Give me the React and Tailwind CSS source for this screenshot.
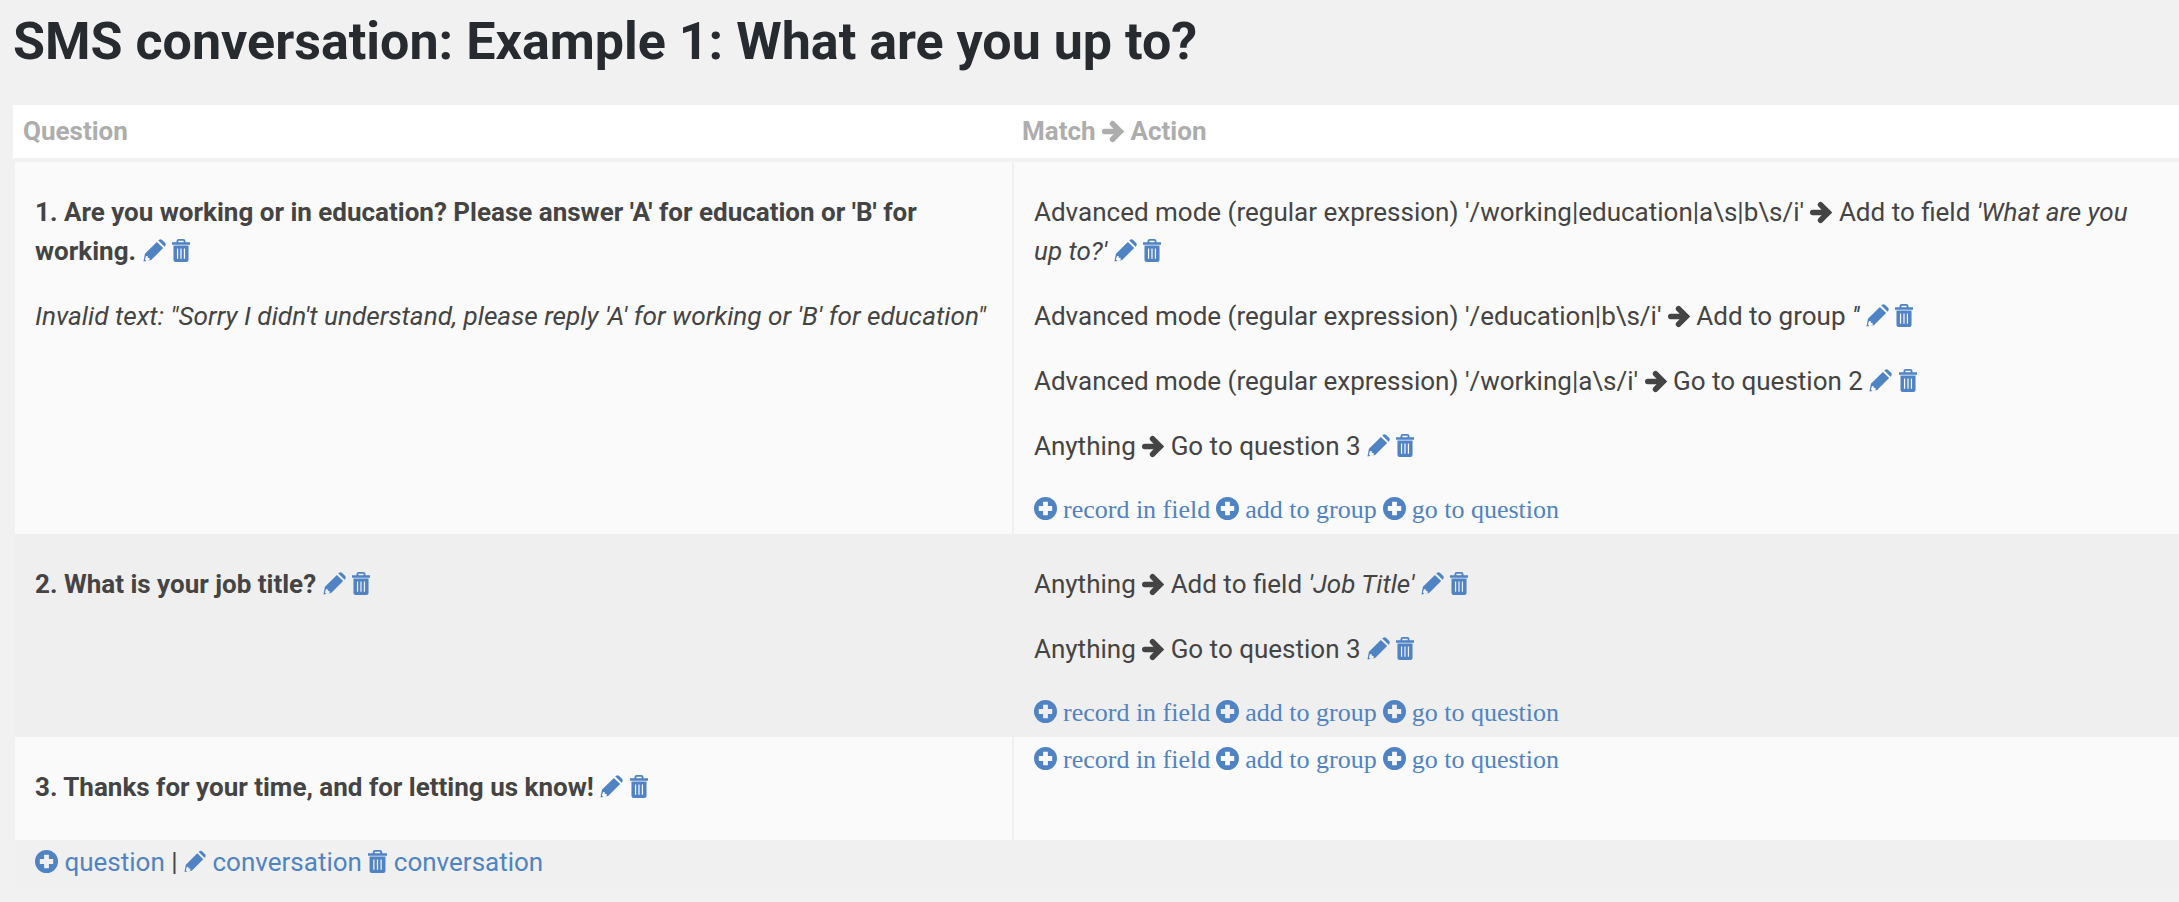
import React from 'react';

function Pencil({ className }) {
  return (
    <svg viewBox="0 0 24 24" fill="currentColor" fillRule="evenodd" className={className}>
      <path d="M2 15.5 14.5 3 21 9.500 8.500 22 .5 23.500ZM3 18l-1 3.500 1.500 1.500 3.500-1-.2-2.300-1.800-.2-.2-1.800Z" />
      <path d="M16 1.500 16.500 1a2.800 2.800 0 0 1 3.500 0l3 3a2.800 2.800 0 0 1 0 3.500L22.500 8Z" />
    </svg>
  );
}

function Trash({ className }) {
  return (
    <svg viewBox="0 0 16 22" fill="currentColor" fillRule="evenodd" preserveAspectRatio="none" className={className}>
      <path d="M4 3V2a2 2 0 0 1 2-2h4a2 2 0 0 1 2 2v1h4v2.500H0V3ZM5.700 3h4.600V1.700H5.700Z" />
      <path d="M1.300 6.300h13.400V20a2 2 0 0 1-2 2H3.300a2 2 0 0 1-2-2ZM4.400 9v10h1.100V9Zm3.050 0v10h1.100V9Zm3.050 0v10h1.100V9Z" />
    </svg>
  );
}

function Plus({ className }) {
  return (
    <svg viewBox="0 0 24 24" fill="currentColor" fillRule="evenodd" className={className}>
      <path d="M12 0a12 12 0 1 1 0 24 12 12 0 0 1 0-24Zm-2.500 5v4.500H5v5h4.500V19h5v-4.500H19v-5h-4.500V5Z" />
    </svg>
  );
}

function Arrow() {
  return (
    <svg viewBox="0 0 24 24" fill="none" stroke="currentColor" strokeWidth="6" strokeLinecap="round" strokeLinejoin="miter" className="inline-block w-[22px] h-[23px] align-[-3px]">
      <path d="M3 12h16M11.500 3.500 20 12l-8.500 8.500" />
    </svg>
  );
}

function Tools() {
  return (
    <span className="text-[#4f83c3]">
      {' '}
      <Pencil className="inline-block w-[23px] h-[23px] align-[-2px]" />{' '}
      <Trash className="inline-block w-[18px] h-[23px] align-[-2px]" />
    </span>
  );
}

function AddLinks() {
  return (
    <div className="font-['Liberation_Serif',serif] text-[#4f83c3] text-[26px] leading-[35px] flex items-center gap-[6px]">
      <span><Plus className="inline-block w-[23px] h-[23px] align-[-2px] mr-[6px]" />record in field</span>
      <span><Plus className="inline-block w-[23px] h-[23px] align-[-2px] mr-[6px]" />add to group</span>
      <span><Plus className="inline-block w-[23px] h-[23px] align-[-2px] mr-[6px]" />go to question</span>
    </div>
  );
}

function Rule({ children }) {
  return <p className="mb-[26px]">{children}<Tools /></p>;
}

export default function App() {
  return (
    <div className="min-h-[902px] bg-[#f1f1f1] pl-[13px] overflow-hidden font-['Roboto',sans-serif] text-[26px] leading-[39px] text-[#444444]">
      <h1 className="text-[52px] leading-[60px] font-bold text-[#272b30] pt-[12px] mb-[33px]">SMS conversation: Example 1: What are you up to?</h1>

      <div className="grid grid-cols-[999px_1fr] h-[53px] bg-white items-center font-bold text-[#adadad]">
        <div className="pl-[10px]">Question</div>
        <div className="pl-[10px]">Match <Arrow /> Action</div>
      </div>

      <div className="ml-[2px] mt-[4px]">
        <div className="grid grid-cols-[999px_1fr] bg-[#fafafa]">
          <div className="pl-[20px] pr-[10px] pt-[31px] border-r-2 border-[#f0f0f0]">
            <p className="font-bold mb-[26px]">1. Are you working or in education? Please answer 'A' for education or 'B' for working.<Tools /></p>
            <p className="italic text-[26.2px]">Invalid text: "Sorry I didn't understand, please reply 'A' for working or 'B' for education"</p>
          </div>
          <div className="px-[20px] pt-[31px] pb-[7px]">
            <Rule>Advanced mode (regular expression) '/working|education|a\s|b\s/i' <Arrow /> Add to field <em>'What are you up to?'</em></Rule>
            <Rule>Advanced mode (regular expression) '/education|b\s/i' <Arrow /> Add to group <em>''</em></Rule>
            <Rule>Advanced mode (regular expression) '/working|a\s/i' <Arrow /> Go to question 2</Rule>
            <Rule>Anything <Arrow /> Go to question 3</Rule>
            <AddLinks />
          </div>
        </div>

        <div className="grid grid-cols-[999px_1fr] bg-[#efefef]">
          <div className="pl-[20px] pr-[10px] pt-[31px]">
            <p className="font-bold">2. What is your job title?<Tools /></p>
          </div>
          <div className="px-[20px] pt-[31px] pb-[7px]">
            <Rule>Anything <Arrow /> Add to field <em>'Job Title'</em></Rule>
            <Rule>Anything <Arrow /> Go to question 3</Rule>
            <AddLinks />
          </div>
        </div>

        <div className="grid grid-cols-[999px_1fr] bg-[#fafafa] h-[103px]">
          <div className="pl-[20px] pr-[10px] pb-[2px] flex items-center border-r-2 border-[#f0f0f0]">
            <p className="font-bold">3. Thanks for your time, and for letting us know!<Tools /></p>
          </div>
          <div className="px-[20px] pt-[5px]">
            <AddLinks />
          </div>
        </div>

        <div className="px-[20px] pt-[3px] pb-[6px] text-[#4f83c3] bg-[#f0f0f0]">
          <Plus className="inline-block w-[23px] h-[23px] align-[-2px]" /> question <span className="text-[#444444]">|</span>{' '}
          <Pencil className="inline-block w-[22px] h-[23px] align-[-2px]" /> conversation{' '}
          <Trash className="inline-block w-[19px] h-[23px] align-[-2px]" /> conversation
        </div>
      </div>
    </div>
  );
}
